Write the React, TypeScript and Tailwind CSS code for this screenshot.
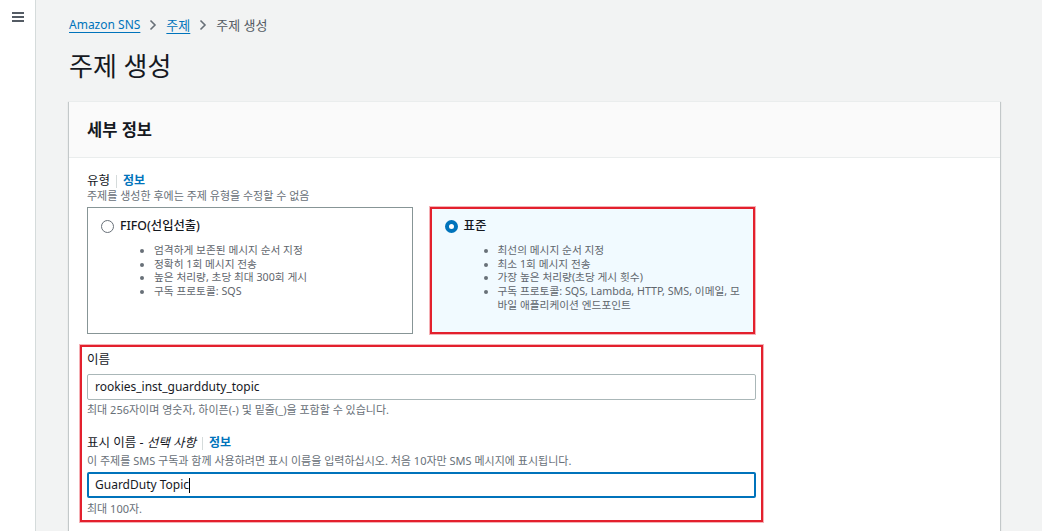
import React from "react";

const font = { fontFamily: '"Noto Sans", "Noto Sans CJK KR", sans-serif' };

function Bullets({ items }: { items: string[] }) {
  return (
    <ul className="list-disc pl-[53px] mt-[10px] text-[10.7px] leading-[13.7px] text-[#5f666d] marker:text-[#687078] break-all">
      {items.map((t) => (
        <li key={t}>{t}</li>
      ))}
    </ul>
  );
}

export default function App() {
  return (
    <div style={font} className="flex w-[1042px] h-[531px] overflow-hidden text-[#16191f]">
      <aside className="w-[36px] shrink-0 bg-white border-r border-[#d5dbdb] pt-[12px] pl-[12px]">
        <div className="flex flex-col gap-[2.5px] w-[12px]">
          <span className="block h-[1.5px] bg-[#545b64]" />
          <span className="block h-[1.5px] bg-[#545b64]" />
          <span className="block h-[1.5px] bg-[#545b64]" />
        </div>
      </aside>
      <main className="flex-1 bg-[#f2f3f3] pl-[33px] pr-[42px] pt-[16px]">
        <nav className="flex items-center h-[18px] text-[12px] leading-[18px]">
          <span className="text-[#0073bb] underline underline-offset-[3px] decoration-[1px]">Amazon SNS</span>
          <svg className="mx-[9px]" width="8" height="12" viewBox="0 0 8 12">
            <path d="M1.5 1.5 L6 6 L1.5 10.5" fill="none" stroke="#687078" strokeWidth="1.6" />
          </svg>
          <span className="text-[#0073bb] underline underline-offset-[3px] decoration-[1px] text-[13px]">주제</span>
          <svg className="mx-[9px]" width="8" height="12" viewBox="0 0 8 12">
            <path d="M1.5 1.5 L6 6 L1.5 10.5" fill="none" stroke="#687078" strokeWidth="1.6" />
          </svg>
          <span className="text-[#545b64] text-[13px]">주제 생성</span>
        </nav>
        <h1 className="mt-[16px] text-[26px] leading-[32px] font-normal">주제 생성</h1>
        <section className="mt-[19px] bg-white border-t border-[#eaeded] shadow-[0_1px_1px_0_rgba(0,28,36,0.3),1px_1px_1px_0_rgba(0,28,36,0.15),-1px_1px_1px_0_rgba(0,28,36,0.15)]">
          <header className="bg-[#fafafa] border-b border-[#eaeded] px-[18px] py-[17px]">
            <h2 className="text-[16.5px] leading-[21px] font-bold">세부 정보</h2>
          </header>
          <div className="px-[18px] pt-[15px] pb-[20px]">
            <div className="w-[668px]">
              <div className="flex items-center text-[12.5px] leading-[16px]">
                <span>유형</span>
                <span className="mx-[6px] h-[13px] border-l border-[#d5dbdb]" />
                <span className="text-[#0073bb] font-bold text-[12px]">정보</span>
              </div>
              <p className="text-[11px] leading-[14px] text-[#687078]">주제를 생성한 후에는 주제 유형을 수정할 수 없음</p>
              <div className="mt-[4px] grid grid-cols-2 gap-[17px]">
                <div className="h-[127px] border border-[#879596] px-[13px] pt-[10px]">
                  <div className="flex items-center h-[16px] gap-[6px]">
                    <span className="w-[13px] h-[13px] rounded-full border-[1.5px] border-[#687078] bg-white" />
                    <span className="text-[12.3px] font-medium">FIFO(선입선출)</span>
                  </div>
                  <Bullets
                    items={[
                      "엄격하게 보존된 메시지 순서 지정",
                      "정확히 1회 메시지 전송",
                      "높은 처리량, 초당 최대 300회 게시",
                      "구독 프로토콜: SQS",
                    ]}
                  />
                </div>
                <div className="h-[127px] border-2 border-[#e3202d] shadow-[0_0_0_1px_rgba(227,32,45,0.35)] bg-[#f1faff] pl-[13px] pr-[10px] pt-[9px]">
                  <div className="flex items-center h-[16px] gap-[6px]">
                    <span className="w-[13px] h-[13px] rounded-full border-[4px] border-[#0073bb] bg-white" />
                    <span className="text-[12.5px] font-medium">표준</span>
                  </div>
                  <Bullets
                    items={[
                      "최선의 메시지 순서 지정",
                      "최소 1회 메시지 전송",
                      "가장 높은 처리량(초당 게시 횟수)",
                      "구독 프로토콜: SQS, Lambda, HTTP, SMS, 이메일, 모바일 애플리케이션 엔드포인트",
                    ]}
                  />
                </div>
              </div>
              <div className="mt-[11px] ml-[-7px] w-[683px] border-2 border-[#e3202d] shadow-[0_0_0_1px_rgba(227,32,45,0.35)] px-[5px] pt-[5px] pb-[4px]">
                <div className="text-[12.5px] leading-[16px]">이름</div>
                <div className="mt-[6px] h-[26px] border border-[#aab7b8] rounded-[2px] px-[7px] flex items-center text-[12px]">
                  rookies_inst_guardduty_topic
                </div>
                <p className="mt-[3px] text-[11px] leading-[14px] text-[#687078]">
                  최대 256자이며 영숫자, 하이픈(-) 및 밑줄(_)을 포함할 수 있습니다.
                </p>
                <div className="mt-[18px] flex items-center text-[12.5px] leading-[16px]">
                  <span>표시 이름 - <i>선택 사항</i></span>
                  <span className="mx-[6px] h-[13px] border-l border-[#d5dbdb]" />
                  <span className="text-[#0073bb] font-bold text-[12px]">정보</span>
                </div>
                <p className="mt-[3px] text-[11px] leading-[14px] text-[#687078]">
                  이 주제를 SMS 구독과 함께 사용하려면 표시 이름을 입력하십시오. 처음 10자만 SMS 메시지에 표시됩니다.
                </p>
                <div className="mt-[4px] h-[26px] border-2 border-[#0073bb] rounded-[2px] px-[6px] flex items-center text-[12px]">
                  <span>GuardDuty Topic</span>
                  <span className="inline-block w-[1px] h-[15px] bg-black" />
                </div>
                <p className="mt-[4px] text-[11px] leading-[14px] text-[#687078]">최대 100자.</p>
              </div>
            </div>
          </div>
        </section>
      </main>
    </div>
  );
}
